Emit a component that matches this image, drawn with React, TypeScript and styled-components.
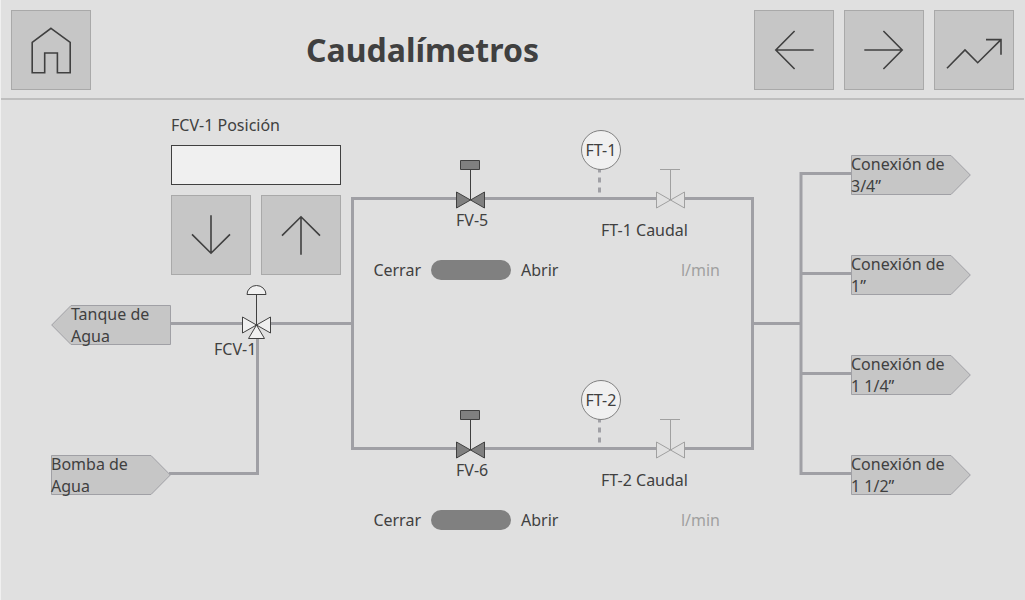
import React from "react";
import styled, { createGlobalStyle } from "styled-components";

const color = {
  page: "#e0e0e0",
  edge: "#f0f0f0",
  rule: "#bebebe",
  panel: "#c6c6c6",
  panelLine: "#a9a9a9",
  pipe: "#a0a0a5",
  muted: "#a0a0a0",
  closed: "#808080",
  light: "#f0f0f0",
  ink: "#404040",
};

const GlobalStyle = createGlobalStyle`
  *, *::before, *::after { box-sizing: border-box; }
  body {
    margin: 0;
    background: ${color.page};
    color: ${color.ink};
    font: 16px/22px "Noto Sans", "Open Sans", sans-serif;
  }
  button, input { font: inherit; color: inherit; }
`;

const Page = styled.div`
  display: flex;
  flex-direction: column;
  min-height: 100vh;
  border-left: 1px solid ${color.edge};
  border-right: 1px solid ${color.page};
`;

const Header = styled.header`
  display: flex;
  align-items: center;
  padding: 10px 10px 8px;
  border-bottom: 2px solid ${color.rule};
`;

const Title = styled.h1`
  flex: 1;
  margin: 0;
  text-align: center;
  font-size: 32px;
  line-height: 44px;
  font-weight: 700;
`;

const ButtonRow = styled.div`
  display: flex;
  gap: 10px;
`;

const IconButton = styled.button`
  display: grid;
  place-items: center;
  width: 80px;
  height: 80px;
  padding: 0;
  border: 1px solid ${color.panelLine};
  border-radius: 0;
  background: ${color.panel};
  cursor: pointer;
`;

const IconDrawing = styled.svg`
  display: block;
  width: 80px;
  height: 80px;
  flex: none;
  margin: -1px;
  fill: none;
  stroke: ${color.ink};
  stroke-width: 1.6;
`;

const iconPaths = {
  home: "M40 18.3 L59.2 32.3 V62.7 H46.4 V43 H33.7 V62.7 H21.2 V32.3 Z",
  left: "M59.7 40 H22 M40.6 21 L21.8 40 L40.6 59",
  right: "M20.3 40 H58 M39.4 21 L58.2 40 L39.4 59",
  down: "M40 20.3 V58 M21 39.4 L40 58.2 L59 39.4",
  up: "M40 59.7 V22 M21 40.6 L40 21.8 L59 40.6",
  trend: "M13 58.2 L31 40 L43.7 52.7 L67 29.6 M52 29.6 H67 V44.7",
};

function Action({ icon, label }: { icon: keyof typeof iconPaths; label: string }) {
  return (
    <IconButton type="button" aria-label={label}>
      <IconDrawing viewBox="0 0 80 80" aria-hidden="true">
        <path d={iconPaths[icon]} />
      </IconDrawing>
    </IconButton>
  );
}

/* The process diagram is a free canvas: nodes sit at plant coordinates. */
const Canvas = styled.main`
  position: relative;
  flex: 1;
  min-width: 980px;
  min-height: 450px;
`;

const Node = styled.div<{ $x: number; $y: number }>`
  position: absolute;
  left: ${(p) => p.$x}px;
  top: ${(p) => p.$y}px;
`;

const Drawing = styled.svg`
  position: absolute;
  left: 0;
  top: 0;
  width: 980px;
  height: 450px;
  fill: none;
`;

const Pipe = styled.path<{ $signal?: boolean }>`
  stroke: ${color.pipe};
  stroke-width: 3;
  stroke-dasharray: ${(p) => (p.$signal ? "5 5" : "none")};
`;

const Symbol = styled.g<{ $kind: "closed" | "open" | "manual" }>`
  stroke-width: 1;
  stroke: ${(p) => (p.$kind === "manual" ? color.muted : color.ink)};
  fill: ${(p) =>
    p.$kind === "closed" ? color.closed : p.$kind === "open" ? color.light : "none"};
`;

const Caption = styled(Node)`
  white-space: nowrap;
`;

const Tag = styled(Node)<{ $point: "left" | "right" }>`
  display: flex;
  align-items: center;
  width: 120px;
  height: 40px;
  padding-left: ${(p) => (p.$point === "left" ? 20 : 0)}px;
  padding-right: ${(p) => (p.$point === "right" ? 20 : 0)}px;
`;

const TagShape = styled.svg`
  position: absolute;
  inset: 0;
  width: 120px;
  height: 40px;
  fill: ${color.panel};
  stroke: ${color.pipe};
`;

const TagText = styled.span`
  position: relative;
`;

const Bubble = styled(Node)`
  display: flex;
  align-items: center;
  justify-content: center;
  width: 40px;
  height: 40px;
  border: 1px solid ${color.closed};
  border-radius: 50%;
  background: ${color.light};
  white-space: nowrap;
`;

const PositionPanel = styled(Node)`
  display: flex;
  flex-direction: column;
  width: 170px;
`;

const FieldLabel = styled.label`
  line-height: 30px;
  margin-bottom: 5px;
`;

const Field = styled.input`
  width: 100%;
  height: 40px;
  margin-bottom: 10px;
  padding: 0 10px;
  border: 1px solid ${color.ink};
  border-radius: 0;
  background: ${color.light};
`;

const ToggleRow = styled(Node)`
  display: grid;
  grid-template-columns: 50px 80px 50px;
  column-gap: 10px;
  align-items: center;
`;

const ToggleSide = styled.label<{ $end?: boolean }>`
  text-align: ${(p) => (p.$end ? "right" : "left")};
`;

const Toggle = styled.input`
  appearance: none;
  width: 80px;
  height: 20px;
  margin: 0;
  border-radius: 10px;
  background: ${color.closed};
  cursor: pointer;
`;

const Reading = styled(Node)`
  display: flex;
  justify-content: flex-end;
  width: 120px;
  padding-right: 1px;
  color: ${color.muted};
`;

function ControlValve({ x, y }: { x: number; y: number }) {
  return (
    <Symbol $kind="closed" transform={`translate(${x} ${y})`}>
      <path d="M0 -30 V0" />
      <path d="M-10 -39.5 H9 V-30.5 H-10 Z" />
      <path d="M-14 -8 V8 L0 0 Z M14 -8 V8 L0 0 Z" />
    </Symbol>
  );
}

function ManualValve({ x, y }: { x: number; y: number }) {
  return (
    <Symbol $kind="manual" transform={`translate(${x} ${y})`}>
      <path d="M-10.5 -30.5 H9.5 M0 -30 V0" />
      <path d="M-14 -8 V8 L0 0 Z M14 -8 V8 L0 0 Z" />
    </Symbol>
  );
}

function ThreeWayValve({ x, y }: { x: number; y: number }) {
  return (
    <Symbol $kind="open" transform={`translate(${x} ${y})`}>
      <path d="M0 -30 V0" />
      <path d="M-9.5 -30.5 A9.5 9 0 0 1 9.5 -30.5 Z" />
      <path d="M-14 -8 V8 L0 0 Z M14 -8 V8 L0 0 Z M-8 13.5 H8 L0 0 Z" />
    </Symbol>
  );
}

type TagProps = { x: number; y: number; point: "left" | "right"; children: string };

function Connection({ x, y, point, children }: TagProps) {
  const outline =
    point === "left"
      ? "M20 0.5 H119.5 V39.5 H20 L0.7 20 Z"
      : "M0.5 0.5 H100 L119.3 20 L100 39.5 H0.5 Z";
  return (
    <Tag $x={x} $y={y} $point={point}>
      <TagShape viewBox="0 0 120 40" aria-hidden="true">
        <path d={outline} />
      </TagShape>
      <TagText>{children}</TagText>
    </Tag>
  );
}

type LineProps = { y: number; valve: string; meter: string };

function MeteringLine({ y, valve, meter }: LineProps) {
  const id = `switch-${valve}`;
  return (
    <>
      <Bubble $x={580} $y={y}>{meter}</Bubble>
      <Caption $x={455} $y={y + 79}>{valve}</Caption>
      <Caption $x={600} $y={y + 89}>{`${meter} Caudal`}</Caption>
      <ToggleRow $x={370} $y={y + 129}>
        <ToggleSide htmlFor={id} $end>Cerrar</ToggleSide>
        <Toggle id={id} type="checkbox" role="switch" />
        <ToggleSide htmlFor={id}>Abrir</ToggleSide>
      </ToggleRow>
      <Reading $x={600} $y={y + 129}>l/min</Reading>
    </>
  );
}

const outlets = [
  { y: 55, name: "Conexión de 3/4”" },
  { y: 155, name: "Conexión de 1”" },
  { y: 255, name: "Conexión de 1\u00a01/4”" },
  { y: 355, name: "Conexión de 1\u00a01/2”" },
];

export default function App() {
  return (
    <>
      <GlobalStyle />
      <Page>
        <Header>
          <Action icon="home" label="Inicio" />
          <Title>Caudalímetros</Title>
          <ButtonRow>
            <Action icon="left" label="Anterior" />
            <Action icon="right" label="Siguiente" />
            <Action icon="trend" label="Tendencias" />
          </ButtonRow>
        </Header>

        <Canvas>
          <Drawing viewBox="0 0 980 450" aria-hidden="true">
            <Pipe d="M169 223.5 H242 M270 223.5 H351.5" />
            <Pipe d="M256.5 238 V373.5 H168" />
            <Pipe d="M455 98.5 H351.5 V348.5 H455" />
            <Pipe d="M484 98.5 H655 M484 348.5 H655" />
            <Pipe d="M684 98.5 H751.5 V348.5 H684" />
            <Pipe d="M751.5 223.5 H800" />
            <Pipe d="M850 73.5 H800 V373.5 H850" />
            <Pipe d="M800 173.5 H850 M800 273.5 H850" />
            <Pipe $signal d="M598.5 67.5 V92.5 M598.5 317.5 V342.5" />
            <ControlValve x={469.5} y={100} />
            <ControlValve x={469.5} y={350} />
            <ManualValve x={669.5} y={100} />
            <ManualValve x={669.5} y={350} />
            <ThreeWayValve x={255.5} y={225} />
          </Drawing>

          <PositionPanel $x={170} $y={10}>
            <FieldLabel htmlFor="fcv-position">FCV-1 Posición</FieldLabel>
            <Field id="fcv-position" type="text" />
            <ButtonRow>
              <Action icon="down" label="Bajar" />
              <Action icon="up" label="Subir" />
            </ButtonRow>
          </PositionPanel>

          <Connection x={50} y={205} point="left">Tanque de Agua</Connection>
          <Connection x={50} y={355} point="right">Bomba de Agua</Connection>
          <Caption $x={213} $y={238}>FCV-1</Caption>

          <MeteringLine y={30} valve="FV-5" meter="FT-1" />
          <MeteringLine y={280} valve="FV-6" meter="FT-2" />

          {outlets.map((o) => (
            <Connection key={o.name} x={850} y={o.y} point="right">
              {o.name}
            </Connection>
          ))}
        </Canvas>
      </Page>
    </>
  );
}
